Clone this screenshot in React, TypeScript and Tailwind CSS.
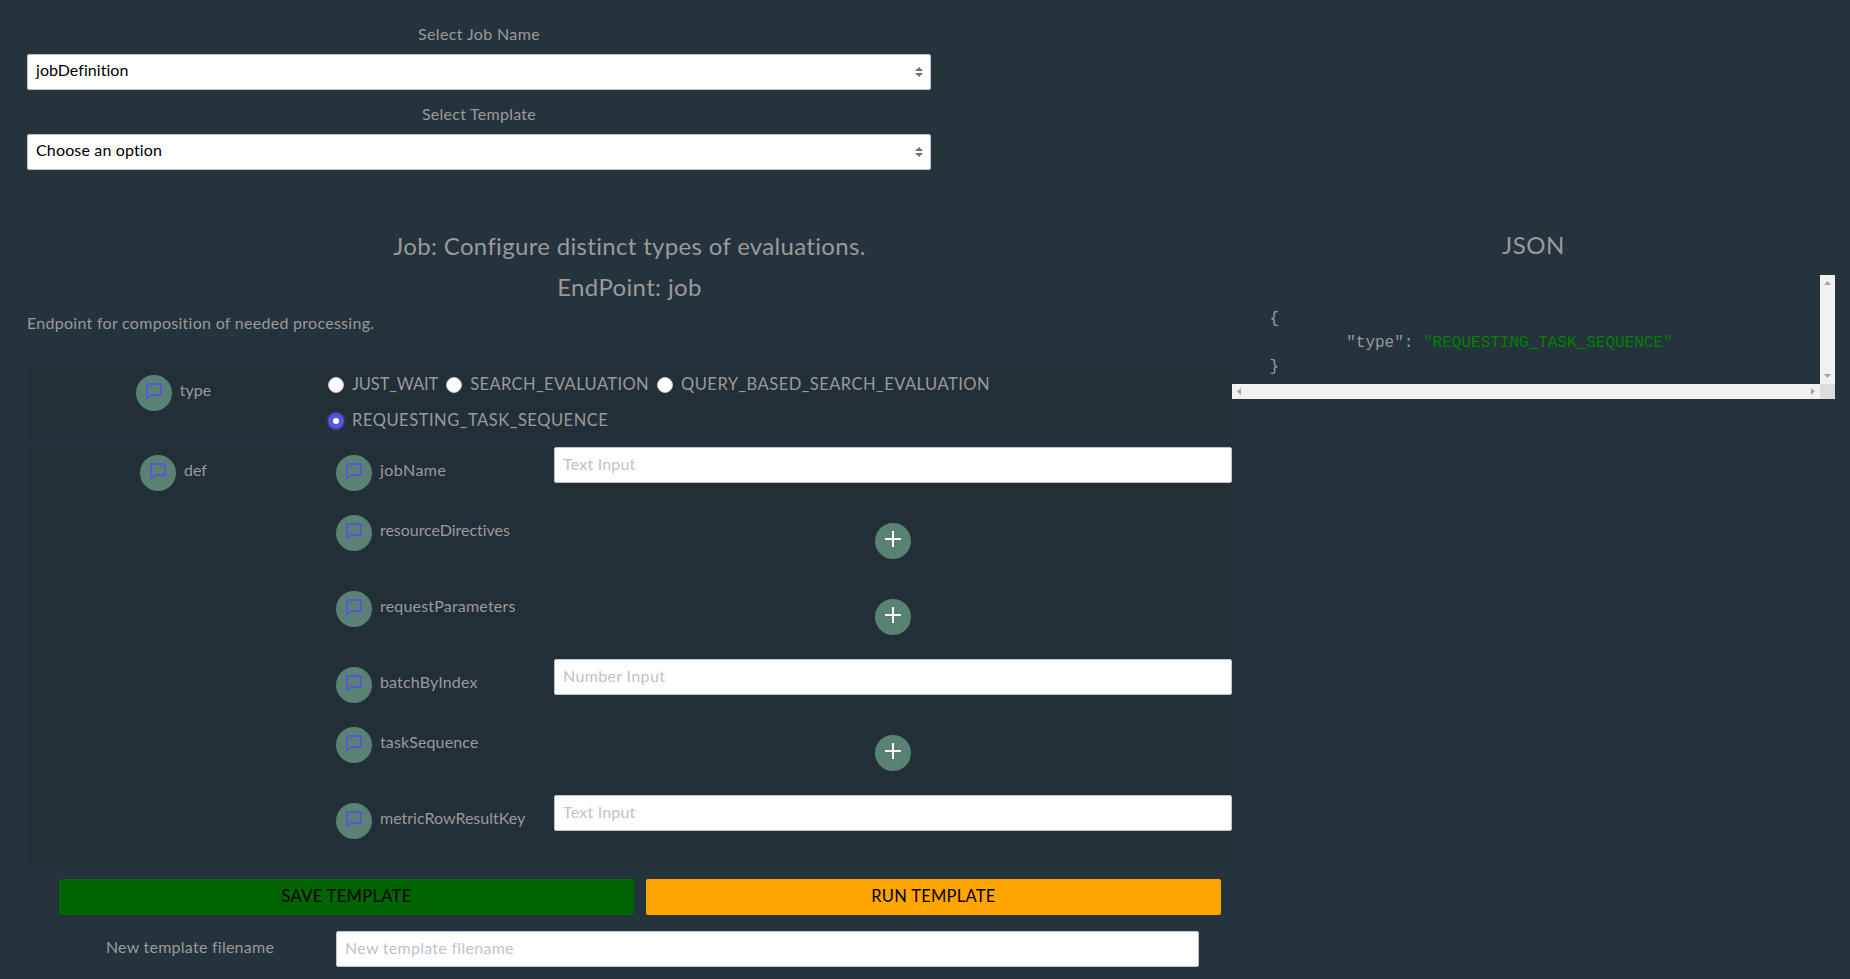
import React from "react";

function MessageBadge() {
  return (
    <span className="flex size-9 shrink-0 items-center justify-center rounded-full bg-[#598274]">
      <svg width="16" height="16" viewBox="0 0 16 16" fill="none" stroke="#5755d9" strokeWidth="1.8" strokeLinejoin="round" className="-translate-y-0.5">
        <path d="M1 1h14v11H5L2.200 15H1z" />
      </svg>
    </span>
  );
}

function AddButton() {
  return (
    <button className="flex size-9 items-center justify-center rounded-full bg-[#598274]">
      <svg width="16" height="16" viewBox="0 0 16 16" className="-translate-y-0.5" stroke="#fff" strokeWidth="2">
        <path d="M0 8H16M8 0V16" />
      </svg>
    </button>
  );
}

function Select({ value, tracking }: { value: string; tracking: string }) {
  return (
    <div className="flex h-9 items-center justify-between rounded-[2px] border border-[#bcc3ce] bg-white pr-[7px] pl-2 text-black">
      <span className={`-translate-y-0.5 ${tracking}`}>{value}</span>
      <svg width="8" height="10" viewBox="0 0 8 10" fill="#667189">
        <path d="M4 0L8 4H0zM4 10L0 6H8z" />
      </svg>
    </div>
  );
}

function Radio({ label, checked = false, tracking }: { label: string; checked?: boolean; tracking: string }) {
  return (
    <label className="flex h-9 items-center gap-2">
      <span
        className={
          checked
            ? "flex size-4 items-center justify-center rounded-full bg-[#5755d9] shadow-[0_0_0_2px_rgba(87,85,217,0.2)]"
            : "flex size-4 rounded-full border border-[#bcc3ce] bg-white"
        }
      >
        {checked && <span className="size-1.5 rounded-full bg-white" />}
      </span>
      <span className={`-translate-y-px text-[16.5px] whitespace-nowrap ${tracking}`}>{label}</span>
    </label>
  );
}

const inputClass =
  "block h-9 w-full rounded-[2px] border border-[#bcc3ce] bg-white px-2 pb-[4px] text-black outline-none placeholder:text-[#bcc3ce]";

type Field = { name: string; tracking: string; placeholder?: string; inputTracking?: string };

const fields: Field[] = [
  { name: "jobName", tracking: "tracking-[0.45px]", placeholder: "Text Input", inputTracking: "tracking-[0.2px]" },
  { name: "resourceDirectives", tracking: "tracking-[-0.04px]" },
  { name: "requestParameters", tracking: "tracking-[0.19px]" },
  { name: "batchByIndex", tracking: "tracking-[0.15px]", placeholder: "Number Input", inputTracking: "tracking-[0.35px]" },
  { name: "taskSequence", tracking: "tracking-[0.12px]" },
  { name: "metricRowResultKey", tracking: "tracking-[0px]", placeholder: "Text Input", inputTracking: "tracking-[0.2px]" },
];

function FieldRow({ field }: { field: Field }) {
  return (
    <div className={field.placeholder ? "flex h-[60px]" : "flex h-[76px]"}>
      <div className="flex w-[226px] items-start gap-2 pt-2 pl-2">
        <MessageBadge />
        <span className={`leading-[30px] ${field.tracking}`}>{field.name}</span>
      </div>
      <div className="flex-1">
        {field.placeholder ? (
          <input className={`${inputClass} ${field.inputTracking}`} placeholder={field.placeholder} />
        ) : (
          <div className="flex justify-center pt-4">
            <AddButton />
          </div>
        )}
      </div>
    </div>
  );
}

function JsonPanel() {
  return (
    <section className="w-[603px] shrink-0">
      <h4 className="mb-2 h-[41px] pt-px text-center text-2xl leading-9 tracking-[0.6px]">JSON</h4>
      <div className="grid h-[124px] grid-cols-[588px_15px] grid-rows-[109px_15px]">
        <pre className="overflow-hidden pt-8 pl-[37.4px] font-['Liberation_Mono',monospace] text-base leading-6 [tab-size:8]">
          {"{\n\t\"type\": "}
          <span className="text-[#008000]">"REQUESTING_TASK_SEQUENCE"</span>
          {"\n}"}
        </pre>
        <div className="flex flex-col items-center justify-between bg-[#f1f1f1] py-[6px]">
          <svg width="7" height="4" fill="#a3a3a3"><path d="M3.500 0L7 4H0z" /></svg>
          <svg width="7" height="4" fill="#a3a3a3"><path d="M0 0H7L3.500 4z" /></svg>
        </div>
        <div className="flex items-center justify-between bg-[#f1f1f1] px-[5px]">
          <svg width="4" height="7" fill="#a3a3a3"><path d="M4 0V7L0 3.500z" /></svg>
          <svg width="4" height="7" fill="#a3a3a3"><path d="M0 0V7L4 3.500z" /></svg>
        </div>
        <div className="bg-[#dcdcdc]" />
      </div>
    </section>
  );
}

export default function App() {
  return (
    <main className="h-[979px] overflow-hidden bg-[#25333c] pt-[18px] pl-[27px] font-['Lato',sans-serif] text-base text-[#9a9a9a]">
      <div className="w-[904px]">
        <div className="h-9 text-center leading-8 tracking-[0.37px]">Select Job Name</div>
        <Select value="jobDefinition" tracking="tracking-[0.04px]" />
        <div className="mt-2 h-9 text-center leading-8 tracking-[0.26px]">Select Template</div>
        <Select value="Choose an option" tracking="tracking-[0.15px]" />
      </div>

      <div className="mt-[56px] flex items-start">
        <section className="w-[1205px] shrink-0">
          <h4 className="h-[41px] pt-[2px] text-center text-2xl leading-9 tracking-[0.32px]">
            Job: Configure distinct types of evaluations.
          </h4>
          <h4 className="h-[41px] pt-[2px] text-center text-2xl leading-9 tracking-[0.34px]">EndPoint: job</h4>
          <p className="h-[59px] leading-[30px] tracking-[0.28px]">Endpoint for composition of needed processing.</p>

          <div className="mb-2 flex h-[72px] bg-[#232f37]">
            <div className="flex w-[301px] items-start justify-center gap-2 pt-2 pr-[8px]">
              <MessageBadge />
              <span className="leading-[30px]">type</span>
            </div>
            <div className="flex w-[760px] flex-wrap content-start gap-x-2">
              <Radio label="JUST_WAIT" tracking="tracking-[-0.13px]" />
              <Radio label="SEARCH_EVALUATION" tracking="tracking-[0.4px]" />
              <Radio label="QUERY_BASED_SEARCH_EVALUATION" tracking="tracking-[0.48px]" />
              <Radio label="REQUESTING_TASK_SEQUENCE" checked tracking="tracking-[0.54px]" />
            </div>
          </div>

          <div className="flex h-[416px] bg-[#232f37]">
            <div className="flex w-[301px] items-start justify-center gap-2 pt-2 pr-[8px]">
              <MessageBadge />
              <span className="leading-[30px]">def</span>
            </div>
            <div className="flex-1">
              {fields.map((f) => (
                <FieldRow key={f.name} field={f} />
              ))}
            </div>
          </div>

          <div className="mt-4 flex gap-3 pr-[11px] pl-8 text-[16.5px] text-black">
            <button className="h-9 flex-1 rounded-[2px] bg-[#006400] pb-[2px] tracking-[0.34px]">SAVE TEMPLATE</button>
            <button className="h-9 flex-1 rounded-[2px] bg-[#ffa500] pb-[2px] tracking-[0.28px]">RUN TEMPLATE</button>
          </div>

          <div className="mt-4 flex items-start pr-[33px]">
            <div className="w-[309px] shrink-0 pl-[17px] text-center leading-8 tracking-[0.25px]">
              New template filename
            </div>
            <input className={`${inputClass} flex-1 tracking-[0.28px]`} placeholder="New template filename" />
          </div>
        </section>
        <JsonPanel />
      </div>
    </main>
  );
}
